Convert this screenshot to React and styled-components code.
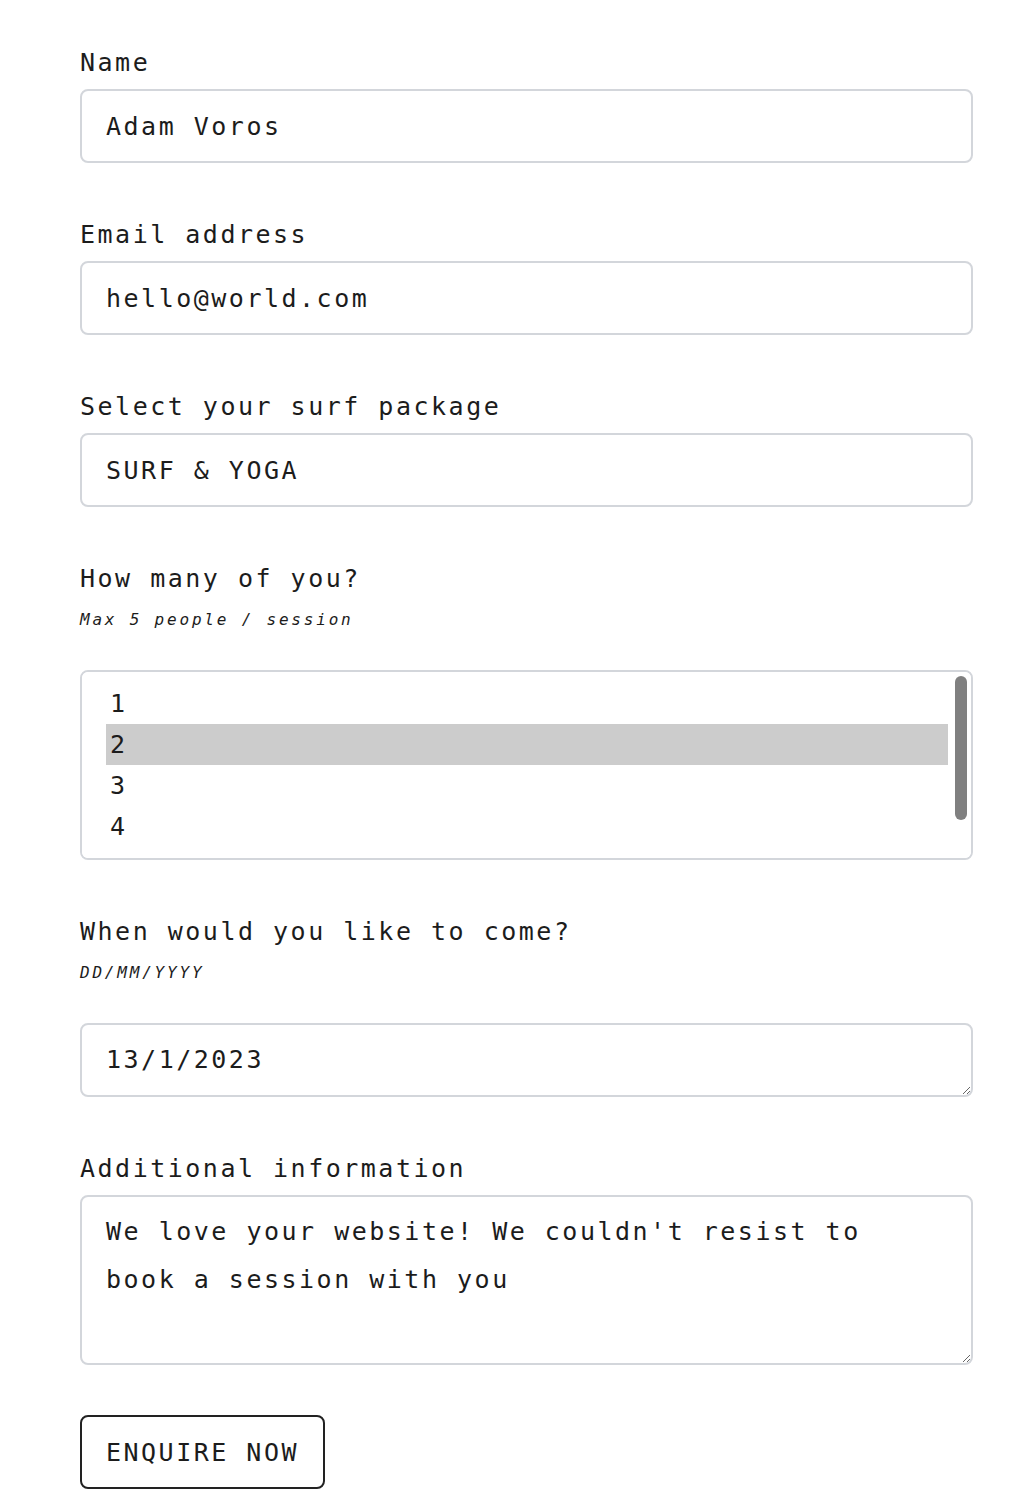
import React from 'react';
import styled, { createGlobalStyle } from 'styled-components';

const GlobalStyle = createGlobalStyle`
  body {
    margin: 0;
    background: #ffffff;
    color: #1c1c1c;
    font-family: 'DejaVu Sans Mono', 'Liberation Mono', monospace;
  }
`;

const Form = styled.form`
  display: flex;
  flex-direction: column;
  width: 893px;
  padding: 45px 0 40px 80px;
`;

const Field = styled.div`
  display: flex;
  flex-direction: column;
  margin-bottom: 54px;
`;

const Label = styled.label`
  font-size: 25px;
  line-height: 36px;
  letter-spacing: 2.5px;
  color: #1c1c1c;
  margin-bottom: ${(p) => (p.$hasHint ? '11px' : '8px')};
`;

const Hint = styled.span`
  font-size: 16px;
  font-style: italic;
  line-height: 24px;
  letter-spacing: 2.8px;
  color: #1c1c1c;
  margin-bottom: 38px;
`;

const TextInput = styled.input`
  box-sizing: border-box;
  width: 100%;
  height: 74px;
  padding: 0 24px;
  border: 2px solid #d3d6db;
  border-radius: 8px;
  background: #fff;
  font: inherit;
  font-size: 25px;
  letter-spacing: 2.5px;
  color: #1c1c1c;
  outline: none;
`;

const PackageSelect = styled.select`
  box-sizing: border-box;
  width: 100%;
  height: 74px;
  padding: 0 24px;
  border: 2px solid #d3d6db;
  border-radius: 8px;
  background: #fff;
  font: inherit;
  font-size: 25px;
  letter-spacing: 2.5px;
  color: #1c1c1c;
  appearance: none;
  outline: none;
`;

const ListWrap = styled.div`
  position: relative;
  width: 100%;
`;

const ListBox = styled.select`
  box-sizing: border-box;
  display: block;
  width: 100%;
  height: 190px;
  padding: 11px 23px 11px 24px;
  border: 2px solid #d3d6db;
  border-radius: 8px;
  background: #fff;
  font: inherit;
  font-size: 25px;
  letter-spacing: 2.5px;
  color: #1c1c1c;
  outline: none;
  overflow-y: auto;

  option {
    box-sizing: border-box;
    height: 41px;
    padding: 6px 4px;
    line-height: 28px;
  }

  option:checked {
    background: #cccccc;
    color: #1c1c1c;
  }
`;

/* overlay scrollbar thumb, like the one drawn by the browser in the picture */
const ScrollThumb = styled.span`
  position: absolute;
  top: 6px;
  right: 6px;
  width: 12px;
  height: 144px;
  border-radius: 6px;
  background: #808080;
  pointer-events: none;
`;

const TextArea = styled.textarea`
  box-sizing: border-box;
  display: block;
  width: 100%;
  height: ${(p) => p.$height}px;
  padding: 11px 40px 11px 24px;
  border: 2px solid #d3d6db;
  border-radius: 8px;
  background: #fff;
  font: inherit;
  font-size: 25px;
  line-height: 48px;
  letter-spacing: 2.5px;
  color: #1c1c1c;
  outline: none;
  resize: vertical;
  overflow: hidden;
`;

const SubmitButton = styled.button`
  align-self: flex-start;
  box-sizing: border-box;
  height: 74px;
  width: 245px;
  margin-top: -4px;
  padding: 0;
  border: 2px solid #222;
  border-radius: 8px;
  background: #fff;
  font: inherit;
  font-size: 25px;
  letter-spacing: 2.5px;
  color: #1c1c1c;
  cursor: pointer;
`;

const App = () => {
  return (
    <>
      <GlobalStyle />
      <Form onSubmit={(e) => e.preventDefault()}>
        <Field>
          <Label htmlFor="name">Name</Label>
          <TextInput id="name" type="text" defaultValue="Adam Voros" />
        </Field>

        <Field>
          <Label htmlFor="email">Email address</Label>
          <TextInput id="email" type="email" defaultValue="hello@world.com" />
        </Field>

        <Field>
          <Label htmlFor="package">Select your surf package</Label>
          <PackageSelect id="package" defaultValue="surf-yoga">
            <option value="surf-yoga">SURF &amp; YOGA</option>
            <option value="surf">SURF ONLY</option>
          </PackageSelect>
        </Field>

        <Field>
          <Label htmlFor="people" $hasHint>How many of you?</Label>
          <Hint>Max 5 people / session</Hint>
          <ListWrap>
            <ListBox id="people" size={5} defaultValue="2">
              <option value="1">1</option>
              <option value="2">2</option>
              <option value="3">3</option>
              <option value="4">4</option>
              <option value="5">5</option>
            </ListBox>
            <ScrollThumb />
          </ListWrap>
        </Field>

        <Field>
          <Label htmlFor="date" $hasHint>When would you like to come?</Label>
          <Hint>DD/MM/YYYY</Hint>
          <TextArea id="date" $height={74} rows={1} defaultValue="13/1/2023" />
        </Field>

        <Field>
          <Label htmlFor="info">Additional information</Label>
          <TextArea
            id="info"
            $height={170}
            defaultValue="We love your website! We couldn't resist to book a session with you"
          />
        </Field>

        <SubmitButton type="submit">ENQUIRE NOW</SubmitButton>
      </Form>
    </>
  );
};

export default App;
